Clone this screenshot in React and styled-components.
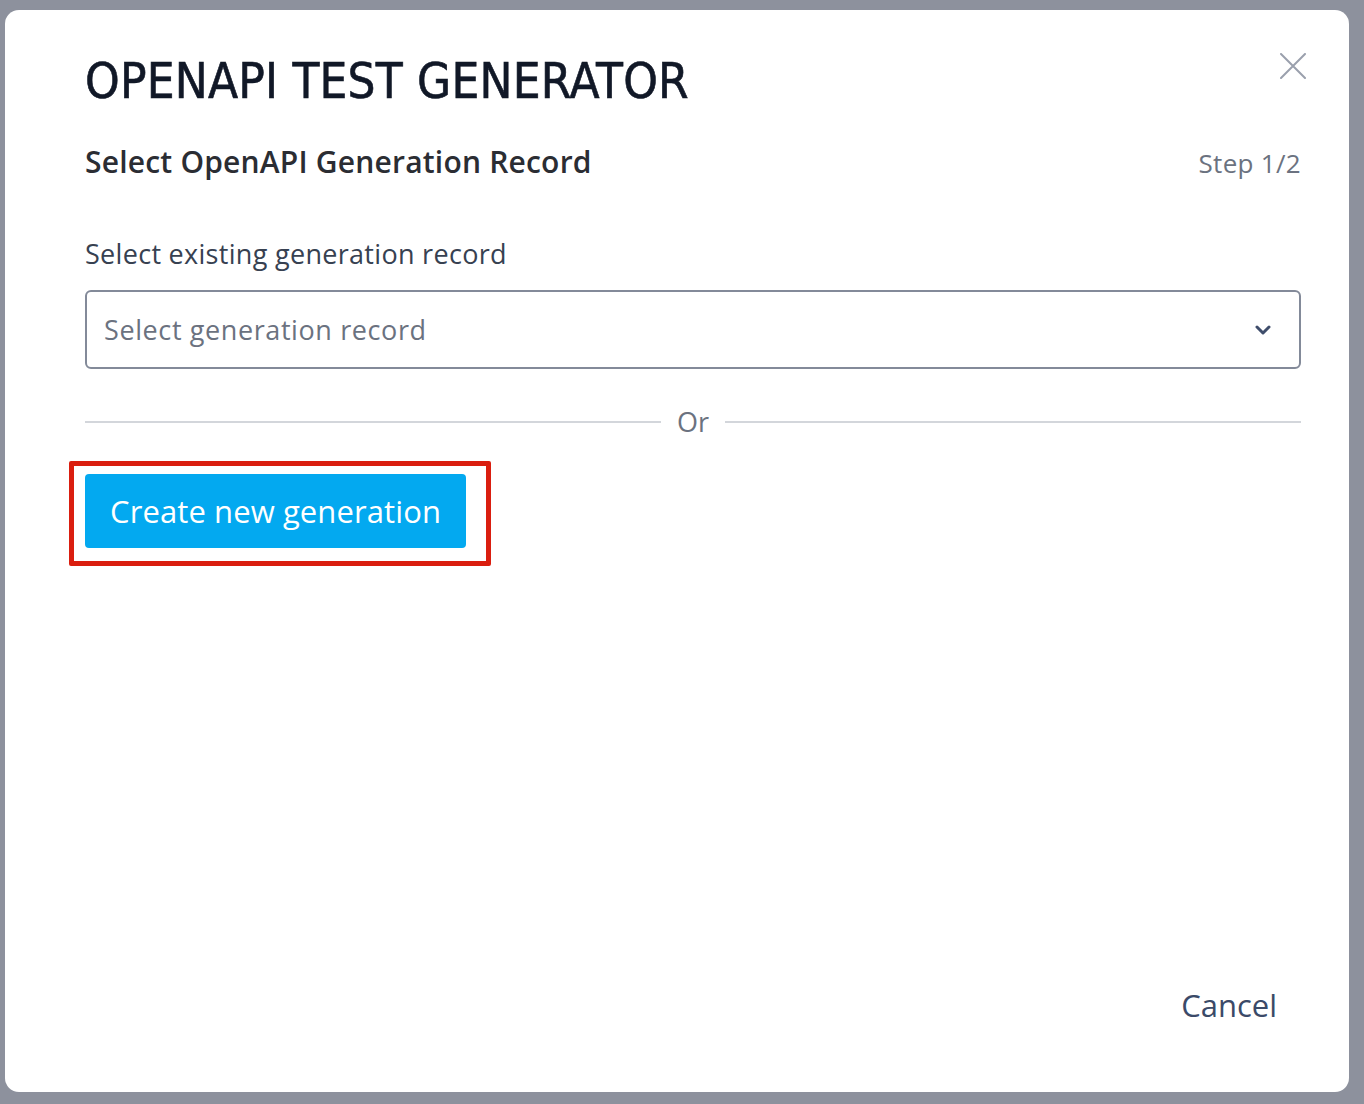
import React from "react";
import styled, { createGlobalStyle } from "styled-components";

const Global = createGlobalStyle`
  html, body { margin: 0; padding: 0; }
  body {
    background: #8d919d;
    font-family: "Open Sans", "Noto Sans", sans-serif;
    width: 1364px;
    height: 1104px;
    overflow: hidden;
  }
`;

const Backdrop = styled.div`
  box-sizing: border-box;
  width: 1364px;
  height: 1104px;
  padding: 10px 15px 12px 5px;
  display: flex;
`;

const Modal = styled.div`
  position: relative;
  flex: 1;
  background: #ffffff;
  border-radius: 14px;
  padding: 42px 48px 66px 80px;
  display: flex;
  flex-direction: column;
`;

const Title = styled.h1`
  margin: 0;
  font-family: "DejaVu Sans Condensed", "DejaVu Sans", sans-serif;
  font-weight: 500;
  font-size: 49px;
  line-height: 60px;
  color: #111827;
  letter-spacing: 0.2px;
  -webkit-text-stroke: 0.6px #111827;
`;

const CloseButton = styled.button`
  position: absolute;
  top: 43px;
  right: 43px;
  width: 26px;
  height: 26px;
  padding: 0;
  border: none;
  background: transparent;
  display: flex;
  cursor: pointer;
`;

const StepRow = styled.div`
  margin-top: 29px;
  display: flex;
  align-items: baseline;
  justify-content: space-between;
`;

const Subtitle = styled.h2`
  margin: 0;
  font-size: 30px;
  font-weight: 600;
  color: #2b2d33;
  letter-spacing: 0.2px;
`;

const Step = styled.span`
  font-size: 26px;
  color: #6b7280;
  letter-spacing: 0.3px;
`;

const Label = styled.label`
  margin-top: 53px;
  font-size: 27px;
  color: #374151;
  letter-spacing: 0.3px;
  display: block;
`;

const SelectBox = styled.div`
  margin-top: 18px;
  box-sizing: border-box;
  height: 79px;
  border: 2px solid #838a99;
  border-radius: 6px;
  padding: 0 28px 0 17px;
  display: flex;
  align-items: center;
  justify-content: space-between;
`;

const Placeholder = styled.span`
  font-size: 27px;
  color: #6b7280;
  letter-spacing: 0.6px;
`;

const Divider = styled.div`
  margin-top: 38px;
  display: flex;
  align-items: center;
  gap: 16px;
`;

const Line = styled.div`
  flex: 1;
  height: 2px;
  background: #d3d6db;
`;

const OrText = styled.span`
  font-size: 27px;
  color: #6b7280;
  line-height: 30px;
`;

const Highlight = styled.div`
  position: relative;
  margin-top: 37px;
  align-self: flex-start;
  &::after {
    content: "";
    position: absolute;
    left: -16px;
    top: -13px;
    right: -25px;
    bottom: -18px;
    border: 5px solid #da1e0f;
    border-radius: 2px;
    pointer-events: none;
  }
`;

const PrimaryButton = styled.button`
  height: 74px;
  padding: 0 25px;
  border: none;
  border-radius: 4px;
  background: #03a9f0;
  color: #ffffff;
  font-family: inherit;
  font-size: 31px;
  letter-spacing: 0.1px;
  cursor: pointer;
`;

const Footer = styled.div`
  margin-top: auto;
  display: flex;
  justify-content: flex-end;
  padding-right: 24px;
`;

const CancelButton = styled.button`
  border: none;
  background: transparent;
  padding: 0;
  font-family: inherit;
  font-size: 31px;
  color: #3b4a68;
  cursor: pointer;
`;

export default function App() {
  return (
    <>
      <Global />
      <Backdrop>
        <Modal>
          <CloseButton aria-label="Close">
            <svg width="26" height="26" viewBox="0 0 26 26">
              <path d="M1 1L25 25M25 1L1 25" stroke="#9aa0ad" strokeWidth="2" strokeLinecap="round" />
            </svg>
          </CloseButton>
          <Title>OPENAPI TEST GENERATOR</Title>
          <StepRow>
            <Subtitle>Select OpenAPI Generation Record</Subtitle>
            <Step>Step 1/2</Step>
          </StepRow>
          <Label>Select existing generation record</Label>
          <SelectBox>
            <Placeholder>Select generation record</Placeholder>
            <svg width="16" height="10" viewBox="0 0 16 10">
              <path d="M2 2L8 8L14 2" fill="none" stroke="#3f4d6b" strokeWidth="3" strokeLinecap="round" strokeLinejoin="round" />
            </svg>
          </SelectBox>
          <Divider>
            <Line />
            <OrText>Or</OrText>
            <Line />
          </Divider>
          <Highlight>
            <PrimaryButton>Create new generation</PrimaryButton>
          </Highlight>
          <Footer>
            <CancelButton>Cancel</CancelButton>
          </Footer>
        </Modal>
      </Backdrop>
    </>
  );
}
